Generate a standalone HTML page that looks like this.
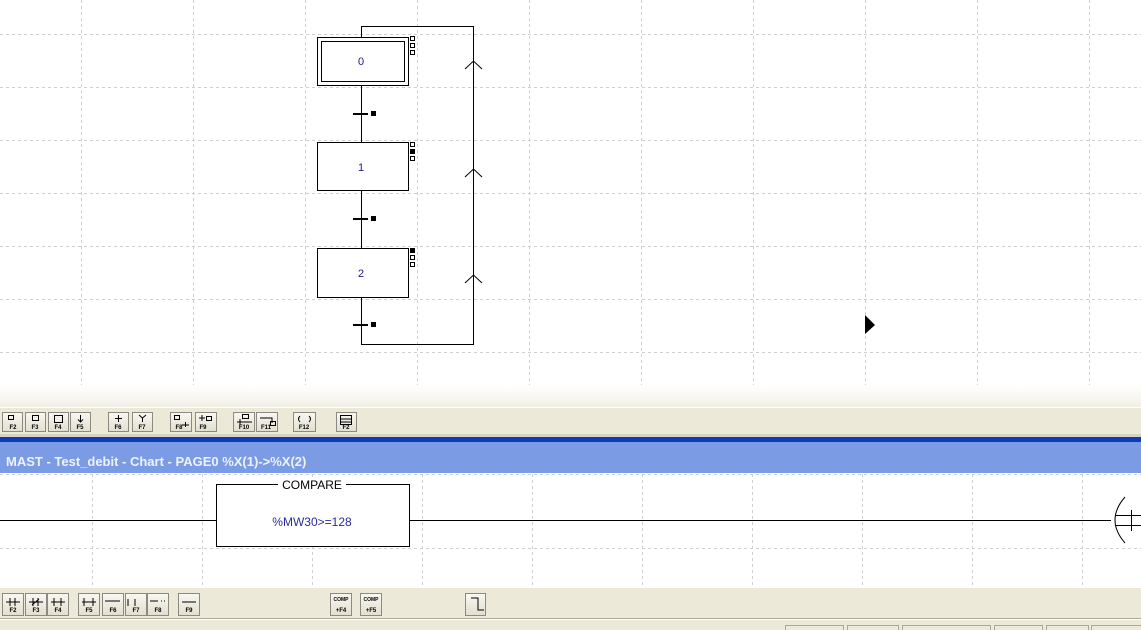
<!DOCTYPE html>
<html><head><meta charset="utf-8"><style>
body{margin:0;width:1141px;height:630px;overflow:hidden;background:#fff;font-family:"Liberation Sans",sans-serif}
svg{display:block}
</style></head><body>
<svg width="1141" height="630" viewBox="0 0 1141 630" xmlns="http://www.w3.org/2000/svg">
<defs>
<linearGradient id="fade" x1="0" y1="0" x2="0" y2="1"><stop offset="0" stop-color="#ffffff"/><stop offset="1" stop-color="#f1efe6"/></linearGradient>
<linearGradient id="btn" x1="0" y1="0" x2="0" y2="1"><stop offset="0" stop-color="#f8f7f2"/><stop offset="1" stop-color="#e2dfd0"/></linearGradient>
</defs>
<rect width="1141" height="630" fill="#fff"/>
<g stroke="#cfcfcf" stroke-dasharray="3,3" stroke-width="1">
<path d="M0 34.5H1141M0 87.5H1141M0 140.5H1141M0 193.5H1141M0 246.5H1141M0 299.5H1141M0 352.5H1141"/>
<path d="M81.5 0V385M193.5 0V385M305.5 0V385M417.5 0V385M529.5 0V385M641.5 0V385M753.5 0V385M865.5 0V385M977.5 0V385M1089.5 0V385"/>
</g>
<rect x="0" y="385" width="1141" height="22" fill="url(#fade)"/>
<g stroke="#000" fill="none" stroke-width="1">
<path d="M361.5 85V142M361.5 190V248M361.5 297V344.5H473.5V26.5H361.5V37"/>
<rect x="317.5" y="37.5" width="91" height="48" fill="#fff"/>
<rect x="321.5" y="41.5" width="83" height="40"/>
<rect x="317.5" y="142.5" width="91" height="48" fill="#fff"/>
<rect x="317.5" y="248.5" width="91" height="49" fill="#fff"/>
<path d="M465 69L473.5 61L482 69M465 177L473.5 169L482 177M465 283L473.5 275L482 283"/>
<rect x="410.5" y="36.5" width="4" height="4"/><rect x="410.5" y="43.5" width="4" height="4"/><rect x="410.5" y="50.5" width="4" height="4"/>
<rect x="410.5" y="142.5" width="4" height="4"/><rect x="410.5" y="156.5" width="4" height="4"/>
<rect x="410.5" y="255.5" width="4" height="4"/><rect x="410.5" y="262.5" width="4" height="4"/>
</g>
<rect x="410" y="149" width="5" height="5"/><rect x="410" y="248" width="5" height="5"/>
<g fill="#000">
<rect x="353" y="113" width="15" height="2"/><rect x="371" y="111" width="5" height="5"/>
<rect x="353" y="218" width="15" height="2"/><rect x="371" y="216" width="5" height="5"/>
<rect x="353" y="324" width="15" height="2"/><rect x="371" y="322" width="5" height="5"/>
<path d="M865 315L875 325L865 334Z"/>
</g>
<g fill="#1a1a8a" font-size="11" text-anchor="middle">
<text x="361" y="65">0</text><text x="361" y="171">1</text><text x="361" y="277">2</text>
</g>
<rect x="0" y="407" width="1141" height="30" fill="#ece9d8"/>
<line x1="0" y1="407.5" x2="1141" y2="407.5" stroke="#fff"/>
<g fill="url(#btn)" stroke="#8c8a80">
<rect x="2.5" y="412.5" width="20" height="19"/><rect x="25.5" y="412.5" width="20" height="19"/><rect x="48.5" y="412.5" width="20" height="19"/><rect x="70.5" y="412.5" width="20" height="19"/>
<rect x="108.5" y="412.5" width="20" height="19"/><rect x="132.5" y="412.5" width="20" height="19"/>
<rect x="170.5" y="412.5" width="21" height="19"/><rect x="195.5" y="412.5" width="21" height="19"/>
<rect x="233.5" y="412.5" width="21" height="19"/><rect x="256.5" y="412.5" width="21" height="19"/>
<rect x="293.5" y="412.5" width="22" height="19"/><rect x="336.5" y="412.5" width="20" height="19"/>
</g>
<g font-size="6" font-weight="bold" fill="#000" text-anchor="middle">
<text x="13" y="429">F2</text><text x="35" y="429">F3</text><text x="58" y="429">F4</text><text x="80" y="429">F5</text>
<text x="118" y="429">F6</text><text x="142" y="429">F7</text><text x="179" y="429">F8</text><text x="203" y="429">F9</text>
<text x="244" y="429">F10</text><text x="266" y="429">F11</text><text x="304" y="429">F12</text><text x="346" y="429">F2</text>
</g>
<g stroke="#000" fill="none">
<rect x="8.5" y="415.5" width="5" height="4"/><rect x="32.5" y="415.5" width="6" height="5"/><rect x="54.5" y="415.5" width="8" height="7"/><path d="M80.5 415V422M78 419.5L80.5 422L83 419.5"/>
<path d="M118.5 415V422M115 418.5H122M139 415L142.5 418L146 415M142.5 418V422"/>
<rect x="174.5" y="415.5" width="5" height="4"/><path d="M182 425H189M185.5 422V427"/><path d="M199 418H205M202 415V421"/><rect x="206.5" y="416.5" width="5" height="4"/>
<rect x="242.5" y="414.5" width="6" height="4"/><path d="M237 422H252M240 419V425"/><path d="M260 418H272V423"/><rect x="270.5" y="421.5" width="5" height="4"/>
<path d="M300 416Q297 419 300 422M309 416Q312 419 309 422"/><rect x="340.5" y="415.5" width="11" height="9"/><path d="M341 419H351M341 422H351"/>
</g>
<rect x="0" y="434" width="1141" height="3" fill="#d7d3c3"/>
<rect x="0" y="437" width="1141" height="5" fill="#0b3bb8"/>
<rect x="0" y="442" width="1141" height="31" fill="#7b9be5"/>
<text x="6" y="466" font-size="13" font-weight="bold" fill="#eef2fd">MAST - Test_debit - Chart - PAGE0 %X(1)-&gt;%X(2)</text>
<rect x="0" y="473" width="1141" height="115" fill="#fff"/>
<g stroke="#cfcfcf" stroke-dasharray="3,3">
<path d="M0 474.5H1141M0 548.5H1141"/>
<path d="M92.5 474V588M202.5 474V588M312.5 474V588M422.5 474V588M532.5 474V588M642.5 474V588M752.5 474V588M862.5 474V588M972.5 474V588M1082.5 474V588"/>
</g>
<g stroke="#000" fill="none">
<path d="M0 520.5H216M410 520.5H1111"/>
<rect x="216.5" y="484.5" width="193" height="62" fill="#fff"/>
<path d="M1125 497Q1105 520 1125 543"/>
<path d="M1116 515.5H1141M1116 525.5H1141M1131.5 510V531"/>
</g>
<rect x="278" y="479" width="68" height="11" fill="#fff"/>
<text x="312" y="489" font-size="12" text-anchor="middle" fill="#000">COMPARE</text>
<text x="312" y="526" font-size="12" text-anchor="middle" fill="#2a2aa0">%MW30&gt;=128</text>
<rect x="0" y="588" width="1141" height="42" fill="#ece9d8"/>
<g fill="url(#btn)" stroke="#8c8a80">
<rect x="2.5" y="593.5" width="21" height="22"/><rect x="25.5" y="593.5" width="21" height="22"/><rect x="47.5" y="593.5" width="21" height="22"/>
<rect x="78.5" y="593.5" width="21" height="22"/><rect x="102.5" y="593.5" width="21" height="22"/><rect x="125.5" y="593.5" width="21" height="22"/><rect x="147.5" y="593.5" width="21" height="22"/>
<rect x="178.5" y="593.5" width="21" height="22"/><rect x="330.5" y="593.5" width="21" height="22"/><rect x="360.5" y="593.5" width="21" height="22"/><rect x="465.5" y="593.5" width="20" height="22"/>
</g>
<g font-size="6" font-weight="bold" fill="#000" text-anchor="middle">
<text x="13" y="612">F2</text><text x="36" y="612">F3</text><text x="58" y="612">F4</text><text x="89" y="612">F5</text><text x="113" y="612">F6</text><text x="136" y="612">F7</text><text x="158" y="612">F8</text><text x="189" y="612">F9</text>
<text x="341" y="601" font-size="5">COMP</text><text x="341" y="612">+F4</text><text x="371" y="601" font-size="5">COMP</text><text x="371" y="612">+F5</text>
</g>
<g stroke="#000" fill="none">
<path d="M6 602H20M10 598V606M15 598V606M29 602H43M33 598V606M38 598V606M32 605L39 599M51 602H65M54 598V606M61 598V606"/>
<path d="M82 602H96M84 598V606M93 598V606M105 601H120M128 599V606M135 599V606M150 601H158M161 601H162M164 601H165M182 602H196"/>
<path d="M471 598H478V610H484"/>
</g>
<line x1="0" y1="618.5" x2="1141" y2="618.5" stroke="#aca899"/>
<line x1="0" y1="619.5" x2="1141" y2="619.5" stroke="#fff"/>
<g fill="none" stroke="#aca899">
<rect x="785.5" y="625.5" width="58" height="8"/><rect x="847.5" y="625.5" width="51" height="8"/><rect x="902.5" y="625.5" width="88" height="8"/><rect x="994.5" y="625.5" width="48" height="8"/><rect x="1046.5" y="625.5" width="42" height="8"/><rect x="1091.5" y="625.5" width="52" height="8"/>
</g>
</svg>
</body></html>
